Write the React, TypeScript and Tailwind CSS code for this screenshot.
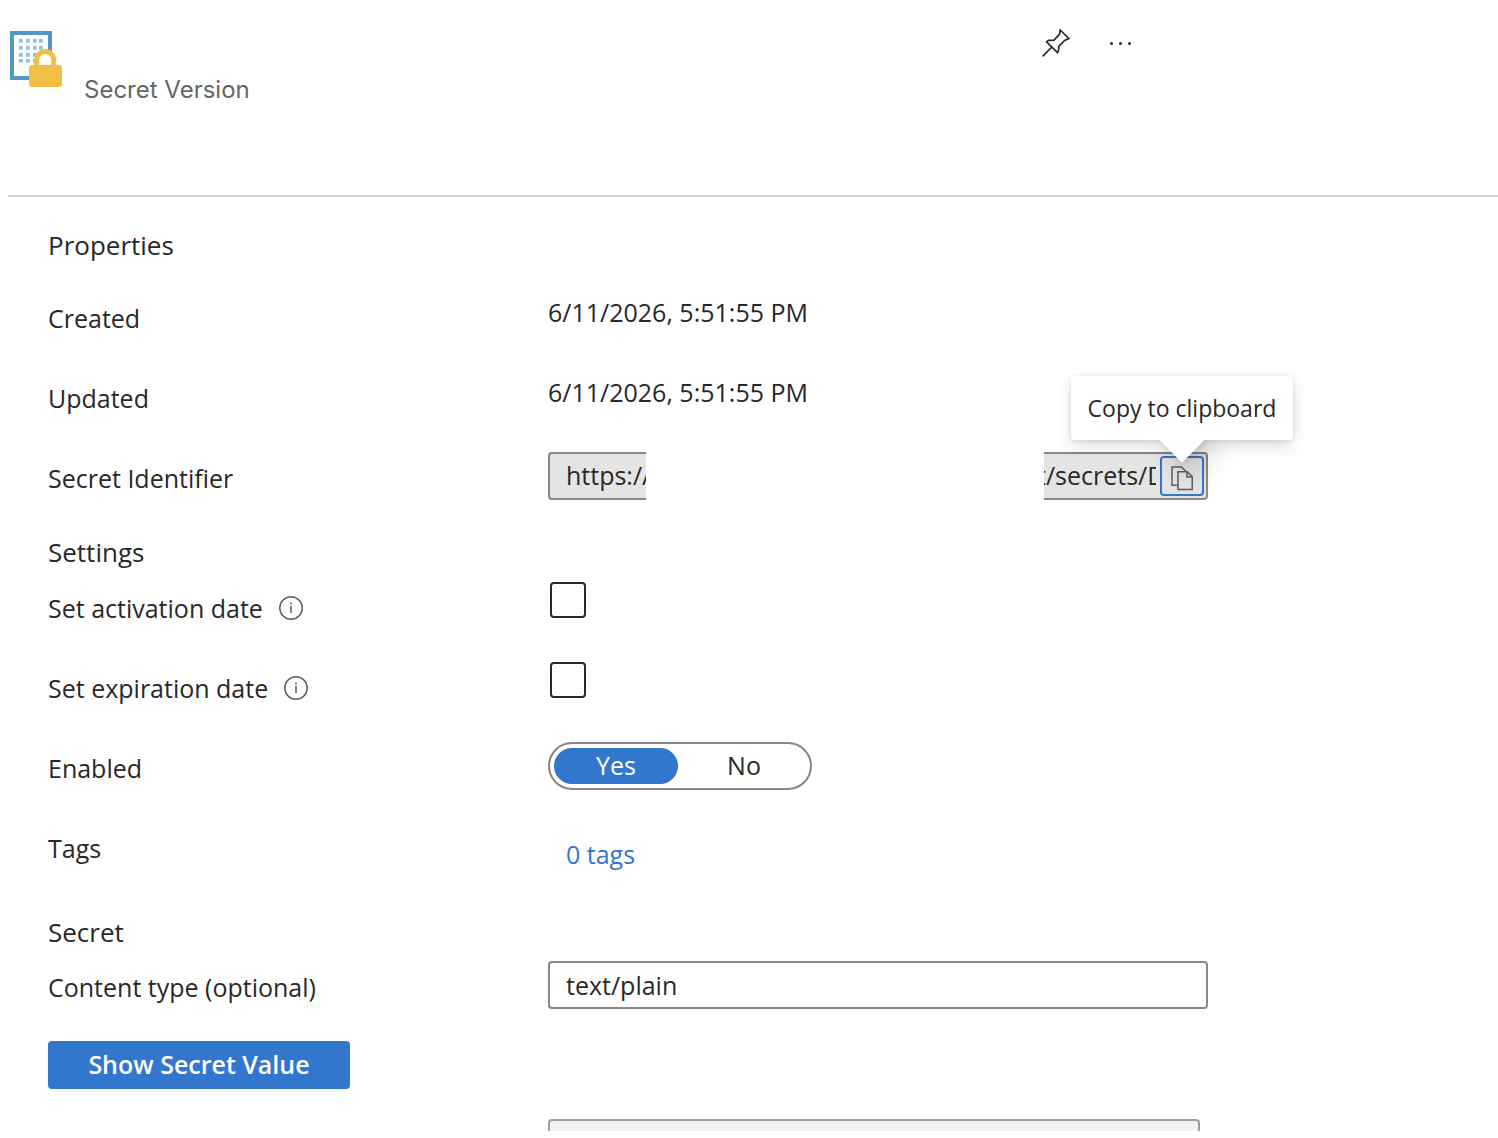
import { useState, type ReactNode } from "react";

const dotRows = [8, 15, 22, 28];
const dotCols = [9, 16, 23, 29];

function SecretIcon() {
  return (
    <svg width="52" height="56" viewBox="0 0 52 56" aria-hidden="true">
      <rect x="2" y="2" width="38" height="45" fill="#fff" stroke="#5596c5" strokeWidth="4" />
      {dotRows.map((y) =>
        dotCols.map((x) => (
          <rect key={`${x}-${y}`} x={x} y={y} width="3.7" height="3.7" fill="#8cc0e0" />
        ))
      )}
      <path
        d="M26.7 36V29a8.5 8.5 0 0 1 17 0V36"
        fill="#fff"
        stroke="#f2bf45"
        strokeWidth="5"
      />
      <rect x="19" y="34" width="33" height="22" rx="3" fill="#f2bf45" />
    </svg>
  );
}

function PinIcon() {
  return (
    <svg width="28" height="28" viewBox="0 0 28 28" fill="none" stroke="#292827" strokeWidth="1.7" aria-hidden="true">
      <path d="M18.2 1 27 9.6 22.6 11.4 16.8 17.4 16.6 21.2 15.4 23.6 4.6 12.8 6.6 11.4 12 11.2 17.6 5.2Z" />
      <path d="M9.8 18 .6 27.4" />
    </svg>
  );
}

function CopyIcon() {
  return (
    <svg width="22" height="25" viewBox="0 0 22 25" fill="none" stroke="#605e5c" strokeWidth="1.5" aria-hidden="true">
      <path d="M6.5 19.2H1V1h9.5l4.5 4.5" />
      <path d="M7 5.8h9.4l4.8 4.8v13H7Z" />
      <path d="M16 6v5h5" />
    </svg>
  );
}

function InfoIcon() {
  return (
    <svg width="24" height="24" viewBox="0 0 24 24" fill="none" stroke="#605e5c" strokeWidth="1.5" aria-hidden="true">
      <circle cx="12" cy="12" r="11.2" />
      <path d="M12 10v7M12 6.5v2" />
    </svg>
  );
}

type RowProps = { label: string; id?: string; info?: boolean; children: ReactNode };

function Row({ label, id, info, children }: RowProps) {
  return (
    <div className="flex h-20 items-start">
      <div className="flex w-[500px] shrink-0 items-center gap-4 leading-[52px]">
        {id ? <label htmlFor={id}>{label}</label> : <span>{label}</span>}
        {info && <InfoIcon />}
      </div>
      {children}
    </div>
  );
}

function Check({ id }: { id: string }) {
  return (
    <input
      id={id}
      type="checkbox"
      className="ml-0.5 size-9 appearance-none rounded-sm border-2 border-[#292827] bg-white checked:bg-[#3376cd]"
    />
  );
}

export default function App() {
  const [enabled, setEnabled] = useState(true);
  const [contentType, setContentType] = useState("text/plain");

  return (
    <main className="min-h-screen w-full bg-white pl-2 font-['Open_Sans',sans-serif] text-[25px] text-[#292827]">
      <header className="flex h-[197px] items-start border-b-2 border-[#d4d4d4] pt-[31px] pl-0.5">
        <SecretIcon />
        <h1 className="mt-10 ml-[22px] font-[Inter,sans-serif] text-[24px] leading-[38px] text-[#666]">
          Secret Version
        </h1>
        <div className="ml-[792px] flex items-center gap-10">
          <button aria-label="Pin" className="-mt-0.5">
            <PinIcon />
          </button>
          <button aria-label="More" className="-mt-0.5 flex h-6 items-center gap-1.5">
            <i className="size-[3px] rounded-full bg-[#292827]" />
            <i className="size-[3px] rounded-full bg-[#292827]" />
            <i className="size-[3px] rounded-full bg-[#292827]" />
          </button>
        </div>
      </header>

      <div className="pl-10">
        <section className="pt-7">
          <h2 className="mb-[27px] text-[26px] leading-10">Properties</h2>
          <Row label="Created">
            <span className="leading-10">6/11/2026, 5:51:55 PM</span>
          </Row>
          <Row label="Updated">
            <span className="leading-10">6/11/2026, 5:51:55 PM</span>
          </Row>
          <Row label="Secret Identifier" id="identifier">
            <div className="relative flex h-12 w-[660px] items-center rounded-sm border-2 border-[#8a8886] bg-[#e4e4e4] pr-0.5">
              <input id="identifier" readOnly value="https://" className="ml-4 w-[120px] outline-none" />
              {/* middle of the url is blanked out */}
              <div className="absolute -inset-y-0.5 left-24 w-[398px] bg-white" />
              <input
                aria-label="Secret Identifier path"
                readOnly
                value="t/secrets/D"
                className="ml-auto w-[119px] outline-none"
              />
              <div className="relative ml-1">
                <button
                  aria-label="Copy to clipboard"
                  className="flex h-10 w-11 items-center justify-center rounded-sm border-2 border-[#3376cd] pt-1"
                >
                  <CopyIcon />
                </button>
                <div className="absolute bottom-14 left-1/2 -translate-x-1/2">
                  <div className="absolute -bottom-4 left-1/2 size-8 -translate-x-1/2 -rotate-45 bg-white shadow-[0_13px_29px_rgba(0,0,0,0.22),0_2px_7px_rgba(0,0,0,0.12)]" />
                  <div className="absolute inset-0 rounded-sm shadow-[0_6px_16px_rgba(0,0,0,0.13),0_1px_4px_rgba(0,0,0,0.11)]" />
                  <div
                    role="tooltip"
                    className="relative flex h-16 w-[222px] items-center justify-center rounded-sm bg-white text-[23px] whitespace-nowrap"
                  >
                    Copy to clipboard
                  </div>
                  <div className="absolute -bottom-4 left-1/2 size-8 -translate-x-1/2 -rotate-45 bg-white [clip-path:polygon(0_0,0_100%,100%_100%)]" />
                </div>
              </div>
            </div>
          </Row>
        </section>

        <section>
          <h2 className="mb-2.5 text-[26px] leading-10">Settings</h2>
          <Row label="Set activation date" id="activation" info>
            <Check id="activation" />
          </Row>
          <Row label="Set expiration date" id="expiration" info>
            <Check id="expiration" />
          </Row>
          <Row label="Enabled">
            <div className="flex h-12 w-[264px] gap-1 rounded-full border-2 border-[#868686] p-1">
              {[true, false].map((on) => (
                <button
                  key={String(on)}
                  aria-pressed={enabled === on}
                  onClick={() => setEnabled(on)}
                  className={`flex flex-1 items-center justify-center rounded-full ${
                    enabled === on ? "bg-[#3376cd] text-white" : ""
                  }`}
                >
                  {on ? "Yes" : "No"}
                </button>
              ))}
            </div>
          </Row>
          <Row label="Tags">
            <a href="#tags" className="ml-[18px] pt-3 leading-10 text-[#3376cd]">
              0 tags
            </a>
          </Row>
        </section>

        <section className="pt-2.5">
          <h2 className="mb-[9px] text-[26px] leading-10">Secret</h2>
          <Row label="Content type (optional)" id="content-type">
            <input
              id="content-type"
              value={contentType}
              onChange={(e) => setContentType(e.target.value)}
              className="h-12 w-[660px] rounded-sm border-2 border-[#8a8886] px-4 outline-none"
            />
          </Row>
          <button className="flex h-12 w-[302px] items-center justify-center rounded-sm bg-[#3376cd] font-semibold text-white">
            Show Secret Value
          </button>
          <div className="mt-[30px] ml-[500px] h-3 w-[652px] overflow-hidden">
            <input
              aria-label="Secret value"
              disabled
              className="block h-12 w-full rounded-sm border-2 border-[#a19f9d] bg-[#f3f2f1]"
            />
          </div>
        </section>
      </div>
    </main>
  );
}
